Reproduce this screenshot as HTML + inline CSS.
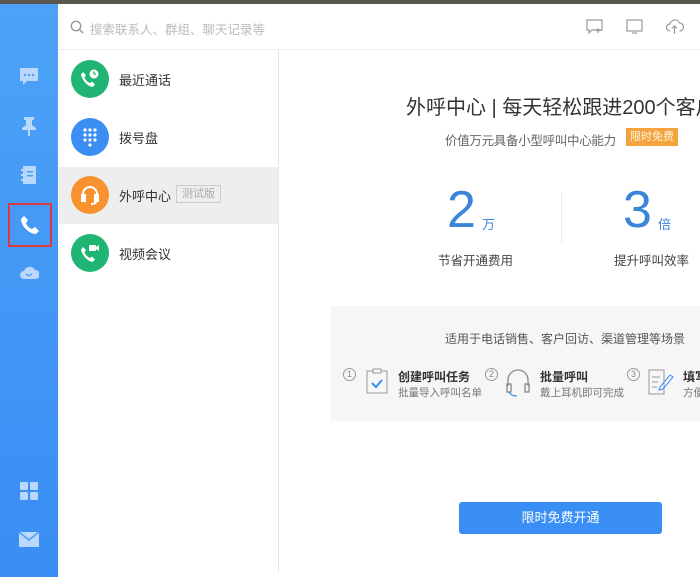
<!DOCTYPE html>
<html><head><meta charset="utf-8"><style>
*{margin:0;padding:0;box-sizing:border-box}
body{width:700px;height:573px;overflow:hidden;background:#fff;font-family:"Liberation Sans","Noto Sans CJK SC",sans-serif;position:relative}
.a{position:absolute;white-space:nowrap}
.side{left:0;top:0;width:58px;height:573px;background:linear-gradient(#4da2f7,#3a8df4)}
.ic{position:absolute;left:19px;width:20px;height:20px;fill:#b9d8fb}
.row{position:absolute;left:59px;width:219px;height:57px}
.circ{position:absolute;left:12px;top:9px;width:38px;height:38px;border-radius:50%}
.lbl{position:absolute;left:60px;top:19px;font-size:13px;color:#333}
</style></head><body>
<div class="a" style="left:0;top:0;width:700px;height:4px;background:#5a5650"></div>
<div class="a side" style="top:4px"></div>
<svg class="ic" style="top:66px" viewBox="0 0 20 20"><path d="M1 2h18v13H8l-4 4v-4H1z"/><circle cx="6" cy="9" r="1.2" fill="#4a9ef6"/><circle cx="10" cy="9" r="1.2" fill="#4a9ef6"/><circle cx="14" cy="9" r="1.2" fill="#4a9ef6"/></svg>
<svg class="ic" style="top:116px" viewBox="0 0 20 20"><path d="M5 1h10v3h-2v5l4 3v2H3v-2l4-3V4H5z M9 14h2v6H9z"/></svg>
<svg class="ic" style="top:165px" viewBox="0 0 20 20"><path d="M4 1h13v18H4z M2 4h3v2H2z M2 9h3v2H2z M2 14h3v2H2z"/><path d="M8 6h6v1.5H8zM8 10h6v1.5H8z" fill="#4a9ef6"/></svg>
<div class="a" style="left:8px;top:203px;width:44px;height:44px;border:2px solid #e0383f"></div>
<svg class="a" style="left:20px;top:215px;width:20px;height:20px" viewBox="0 0 20 20"><path fill="#fff" d="M4 1l4 4-2 3c1 3 3 5 6 6l3-2 4 4-3 3C9 19 1 11 1 4z"/></svg>
<svg class="ic" style="top:262px" viewBox="0 0 20 20"><path d="M5 17a4 4 0 010-8 6 6 0 0111-1 4.5 4.5 0 011 9z"/><path d="M7 12q3 3 6 0" stroke="#4a9ef6" stroke-width="1.5" fill="none"/></svg>
<svg class="ic" style="top:481px" viewBox="0 0 20 20"><rect x="1" y="1" width="8" height="8" rx="1.5"/><rect x="11" y="1" width="8" height="8" rx="1.5"/><rect x="1" y="11" width="8" height="8" rx="1.5"/><rect x="11" y="11" width="8" height="8" rx="1.5"/></svg>
<svg class="ic" style="top:529px" viewBox="0 0 20 20"><path d="M0 3h20v15H0z"/><path d="M0 3l10 8 10-8" stroke="#4a9ef6" stroke-width="1.5" fill="none"/></svg>
<svg class="a" style="left:70px;top:20px;width:14px;height:14px" viewBox="0 0 14 14"><circle cx="6" cy="6" r="4.7" stroke="#999" stroke-width="1.4" fill="none"/><path d="M9.5 9.5l3.5 3.5" stroke="#999" stroke-width="1.5"/></svg>
<div class="a" style="left:90px;top:19px;font-size:12.5px;color:#bbb">搜索联系人、群组、聊天记录等</div>
<svg class="a" style="left:586px;top:19px;width:18px;height:16px" viewBox="0 0 18 16" fill="none" stroke="#999" stroke-width="1.2"><path d="M1 1h15v10H6l-3 3v-3H1z"/><path d="M12 9v5M9.5 11.5h5"/></svg>
<svg class="a" style="left:626px;top:19px;width:17px;height:16px" viewBox="0 0 17 16" fill="none" stroke="#999" stroke-width="1.2"><rect x="1" y="1" width="15" height="11"/><path d="M6 14h5"/></svg>
<svg class="a" style="left:665px;top:18px;width:19px;height:17px" viewBox="0 0 19 17" fill="none" stroke="#999" stroke-width="1.2"><path d="M5 13a3.5 3.5 0 010-7 5 5 0 019.5-1 4 4 0 010 8"/><path d="M9.5 8v8M7 10.5l2.5-2.5 2.5 2.5"/></svg>
<div class="a" style="left:59px;top:49px;width:641px;height:1px;background:#eee"></div>
<div class="a" style="left:278px;top:50px;width:1px;height:523px;background:#e8e8e8"></div>
<div class="row" style="top:51px"><div class="circ" style="background:#21b573"></div>
<svg class="a" style="left:20px;top:17px;width:22px;height:22px" viewBox="0 0 22 22"><path fill="#fff" d="M4 4l3 3-1.5 2.5c1 2.5 3 4.5 5.5 5.5L13 13.5l3 3-2.5 2.5C8 18 3 12 2 6.5z"/><circle cx="15" cy="6" r="4.5" fill="#fff"/><path d="M15 3.5V6h2" stroke="#21b573" stroke-width="1.2" fill="none"/></svg>
<div class="lbl">最近通话</div></div>
<div class="row" style="top:109px"><div class="circ" style="background:#3b8ff3"></div>
<svg class="a" style="left:20px;top:17px;width:22px;height:22px" viewBox="0 0 22 22" fill="#fff"><circle cx="6" cy="4" r="1.6"/><circle cx="11" cy="4" r="1.6"/><circle cx="16" cy="4" r="1.6"/><circle cx="6" cy="9" r="1.6"/><circle cx="11" cy="9" r="1.6"/><circle cx="16" cy="9" r="1.6"/><circle cx="6" cy="14" r="1.6"/><circle cx="11" cy="14" r="1.6"/><circle cx="16" cy="14" r="1.6"/><circle cx="11" cy="19" r="1.6"/></svg>
<div class="lbl">拨号盘</div></div>
<div class="row" style="top:167px;background:#eeeeee"><div class="circ" style="background:#f7922f"></div>
<svg class="a" style="left:20px;top:17px;width:22px;height:22px" viewBox="0 0 22 22" fill="none" stroke="#fff" stroke-width="2"><path d="M4 13V10a7 7 0 0114 0v3"/><rect x="3" y="11" width="3" height="6" fill="#fff"/><rect x="16" y="11" width="3" height="6" fill="#fff"/><path d="M17 17q0 3-5 3"/></svg>
<div class="lbl">外呼中心</div>
<div class="a" style="left:117px;top:18px;width:45px;height:18px;border:1px solid #ccc;font-size:11px;color:#aaa;text-align:center;line-height:16px">测试版</div></div>
<div class="row" style="top:225px"><div class="circ" style="background:#21b573"></div>
<svg class="a" style="left:20px;top:17px;width:22px;height:22px" viewBox="0 0 22 22" fill="#fff"><path d="M4 5l3 3-1.5 2.5c1 2.5 3 4.5 5.5 5.5L13 14.5l3 3-2.5 2.5C8 19 3 13 2 7.5z"/><rect x="10" y="3" width="7" height="6" rx="1"/><path d="M17 5l3-2v6l-3-2z"/></svg>
<div class="lbl">视频会议</div></div>
<div class="a" style="left:406px;top:91px;font-size:20px;color:#333">外呼中心 | 每天轻松跟进200个客户</div>
<div class="a" style="left:445px;top:130px;font-size:12.5px;color:#666;letter-spacing:-0.3px">价值万元具备小型呼叫中心能力</div>
<div class="a" style="left:626px;top:128px;width:52px;height:18px;background:#f4a43c;font-size:11px;text-align:center;line-height:18px;color:#fff2e0">限时免费</div>
<div class="a" style="left:447px;top:182px;font-size:52px;color:#3b86d9;line-height:56px">2</div>
<div class="a" style="left:482px;top:214px;font-size:13px;color:#3b86d9">万</div>
<div class="a" style="left:623px;top:182px;font-size:52px;color:#3b86d9;line-height:56px">3</div>
<div class="a" style="left:658px;top:214px;font-size:13px;color:#3b86d9">倍</div>
<div class="a" style="left:561px;top:192px;width:1px;height:53px;background:#eee"></div>
<div class="a" style="left:438px;top:250px;font-size:12.5px;color:#444">节省开通费用</div>
<div class="a" style="left:614px;top:250px;font-size:12.5px;color:#444">提升呼叫效率</div>
<div class="a" style="left:331px;top:306px;width:369px;height:115px;background:#f6f6f6"></div>
<div class="a" style="left:445px;top:330px;font-size:12px;color:#555">适用于电话销售、客户回访、渠道管理等场景</div>
<div class="a" style="left:343px;top:368px;width:13px;height:13px;border:1px solid #999;border-radius:50%;font-size:9px;color:#888;text-align:center;line-height:11px">1</div>
<svg class="a" style="left:366px;top:368px;width:22px;height:26px" viewBox="0 0 22 26" fill="none" stroke="#999"><rect x="1" y="3" width="20" height="22"/><rect x="7" y="1" width="8" height="4" fill="#f6f6f6"/><path d="M6 15l4 4 6-7" stroke="#3b8ff3" stroke-width="2"/></svg>
<div class="a" style="left:398px;top:368px;font-size:12px;color:#333;font-weight:bold">创建呼叫任务</div>
<div class="a" style="left:398px;top:385px;font-size:10.5px;color:#777">批量导入呼叫名单</div>
<div class="a" style="left:485px;top:368px;width:13px;height:13px;border:1px solid #999;border-radius:50%;font-size:9px;color:#888;text-align:center;line-height:11px">2</div>
<svg class="a" style="left:505px;top:368px;width:26px;height:30px" viewBox="0 0 26 30" fill="none" stroke="#888" stroke-width="1.3"><path d="M3 18v-6a10 10 0 0120 0v6"/><rect x="2" y="16" width="4" height="8"/><rect x="20" y="16" width="4" height="8"/><path d="M4 24q2 4 8 4" stroke="#3b8ff3"/></svg>
<div class="a" style="left:540px;top:368px;font-size:12px;color:#333;font-weight:bold">批量呼叫</div>
<div class="a" style="left:540px;top:385px;font-size:10.5px;color:#777">戴上耳机即可完成</div>
<div class="a" style="left:627px;top:368px;width:13px;height:13px;border:1px solid #999;border-radius:50%;font-size:9px;color:#888;text-align:center;line-height:11px">3</div>
<svg class="a" style="left:648px;top:369px;width:26px;height:26px" viewBox="0 0 26 26" fill="none" stroke="#999"><path d="M1 1h15v24H1z"/><path d="M4 8h8M4 13h6M4 18h5"/><path d="M12 18l10-12 3 2-10 12-4 1z" stroke="#3b8ff3"/></svg>
<div class="a" style="left:683px;top:368px;font-size:12px;color:#333;font-weight:bold">填写</div>
<div class="a" style="left:683px;top:385px;font-size:10.5px;color:#777">方便</div>
<div class="a" style="left:459px;top:502px;width:203px;height:32px;background:#3a8ff5;border-radius:3px;color:#fff;font-size:13px;text-align:center;line-height:32px">限时免费开通</div>
</body></html>
